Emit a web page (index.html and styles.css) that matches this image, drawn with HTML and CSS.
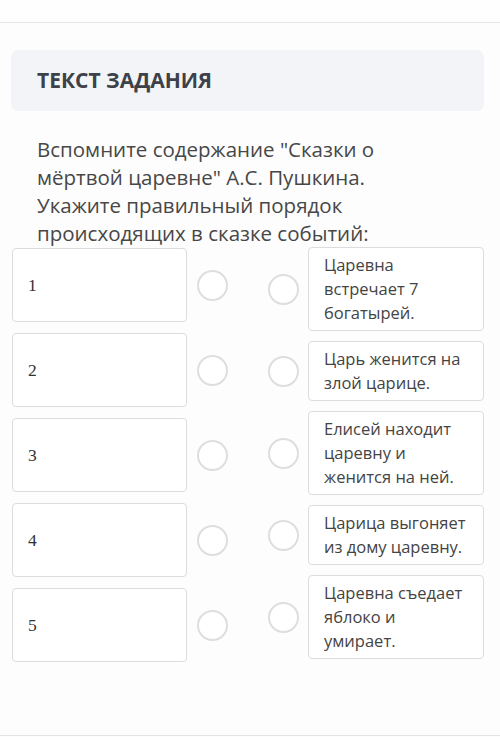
FILE: index.html
```html
<!doctype html>
<html lang="ru">
<head>
	<meta charset="UTF-8">
	<title>Текст задания</title>
	<link rel="stylesheet" href="styles.css">
</head>
<body>
	<div class="topbar"></div>
	<div class="task">
		<div class="task-head">ТЕКСТ ЗАДАНИЯ</div>
		<div class="task-text">Вспомните содержание "Сказки о мёртвой царевне" А.С. Пушкина. Укажите правильный порядок происходящих в сказке событий:</div>
		<div class="match">
			<div class="match-col match-left">
				<div class="match-row"><div class="slot">1</div><span class="dot"></span></div>
				<div class="match-row"><div class="slot">2</div><span class="dot"></span></div>
				<div class="match-row"><div class="slot">3</div><span class="dot"></span></div>
				<div class="match-row"><div class="slot">4</div><span class="dot"></span></div>
				<div class="match-row"><div class="slot">5</div><span class="dot"></span></div>
			</div>
			<div class="match-col match-right">
				<div class="match-row"><span class="dot"></span><div class="answer">Царевна встречает 7 богатырей.</div></div>
				<div class="match-row"><span class="dot"></span><div class="answer">Царь женится на злой царице.</div></div>
				<div class="match-row"><span class="dot"></span><div class="answer">Елисей находит царевну и женится на ней.</div></div>
				<div class="match-row"><span class="dot"></span><div class="answer">Царица выгоняет из дому царевну.</div></div>
				<div class="match-row"><span class="dot"></span><div class="answer">Царевна съедает яблоко и умирает.</div></div>
			</div>
		</div>
	</div>
	<div class="bottombar"></div>
</body>
</html>
```

FILE: styles.css
```css
html,body{width:100%;height:100%;}
body{margin:0;background:#fdfdfd;font-family:"Open Sans","Noto Sans",sans-serif;color:#444;}
.topbar{height:22px;background:#fefefe;border-bottom:1px solid #e6e6e6;}
.task{padding:27px 16px 0 11px;}
.task-head{background:#f3f4f7;border-radius:7px;height:61px;line-height:61px;padding-left:26px;font-size:21px;font-weight:700;color:#3d4149;}
.task-text{margin-top:24px;padding:0 64px 0 26px;font-size:20.5px;line-height:28px;color:#474747;}
.match{display:flex;align-items:flex-start;margin-top:1px;}
.match-col{display:flex;flex-direction:column;width:216px;}
.match-left{margin-left:1px;gap:11px;}
.match-right{margin-left:40px;gap:10px;margin-top:-1px;}
.match-row{display:flex;align-items:center;}
.slot{box-sizing:border-box;width:175px;height:74px;border:1px solid #dcdcdc;border-radius:4px;background:#fff;padding-left:15px;display:flex;align-items:center;font-family:"Liberation Serif",serif;font-size:17.5px;color:#333;}
.dot{box-sizing:border-box;flex:none;width:31px;height:31px;border:2px solid #dedede;border-radius:50%;background:#fff;}
.match-left .dot{margin-left:10px;}
.match-right .dot{margin-right:9px;}
.answer{box-sizing:border-box;width:176px;border:1px solid #dcdcdc;border-radius:4px;background:#fff;padding:5px 14px 5px 15px;font-size:16.5px;line-height:24px;color:#444;}
.bottombar{margin-top:73px;border-top:1px solid #e3e3e3;height:6px;}
```
